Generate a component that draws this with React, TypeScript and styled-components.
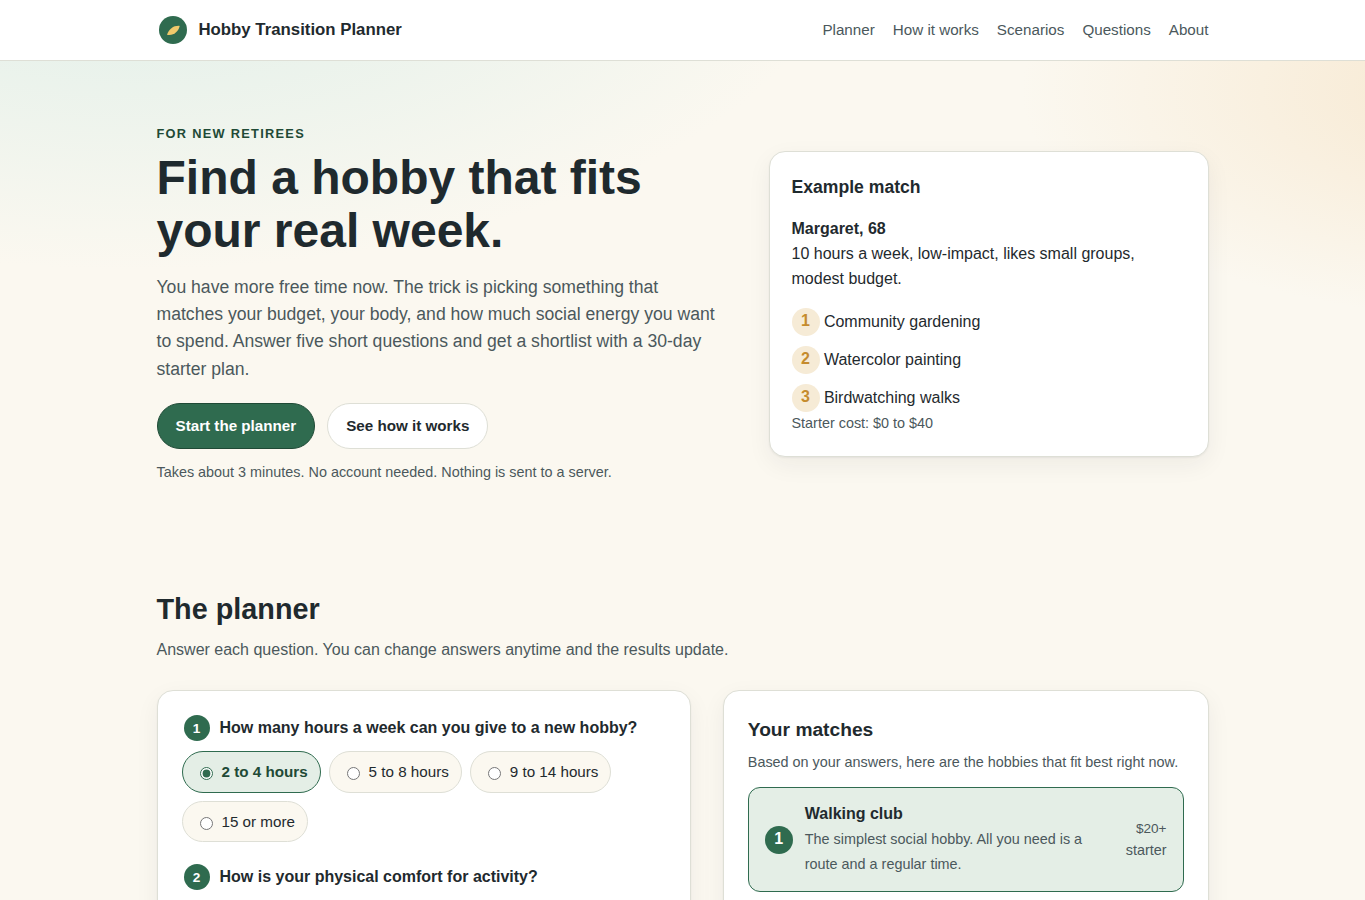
import React, { useState } from "react";
import styled, { createGlobalStyle } from "styled-components";

const c = {
  ink: "#1f2a2e",
  muted: "#4b585c",
  green: "#2f6b4f",
  greenDark: "#1f4a36",
  greenSoft: "#e4eee6",
  paper: "#fbf8f0",
  line: "#dedfd6",
  amber: "#c58b2e",
  amberSoft: "#f6ebd6",
};

const GlobalStyle = createGlobalStyle`
  * { box-sizing: border-box; }
  body {
    margin: 0;
    font-family: "Liberation Sans", Arial, sans-serif;
    font-size: 16px;
    line-height: 1.55;
    color: ${c.ink};
    background:
      radial-gradient(1200px 600px at 10% -10%, #dceee8 0%, transparent 60%),
      radial-gradient(800px 380px at 110% 10%, #f7e8d0 0%, transparent 60%),
      ${c.paper};
  }
`;

const Page = styled.div`
  height: 100vh;
  overflow: hidden;
`;

const Container = styled.div`
  max-width: 1100px;
  margin: 0 auto;
  padding: 0 24px;
`;

const Header = styled.header`
  background: #fff;
  border-bottom: 1px solid ${c.line};
`;

const HeaderRow = styled(Container)`
  display: flex;
  align-items: center;
  justify-content: space-between;
  height: 60px;
`;

const Brand = styled.div`
  display: flex;
  align-items: center;
  gap: 10px;
  font-weight: 700;
  font-size: 16.8px;
`;

const Nav = styled.nav`
  display: flex;
  gap: 18px;
`;

const NavLink = styled.a`
  color: ${c.muted};
  font-size: 15.2px;
  text-decoration: none;
`;

const Hero = styled(Container)`
  display: grid;
  grid-template-columns: 1.3fr 1fr;
  gap: 40px;
  align-items: center;
  padding-top: 63.4px;
`;

const Eyebrow = styled.p`
  margin: 0 0 8px;
  font-size: 12.8px;
  font-weight: 700;
  letter-spacing: 0.1em;
  text-transform: uppercase;
  color: ${c.greenDark};
`;

const Title = styled.h1`
  margin: 0 0 16px;
  font-size: 48px;
  line-height: 1.1;
`;

const Lead = styled.p`
  margin: 0 0 20.3px;
  font-size: 17.6px;
  color: ${c.muted};
`;

const Actions = styled.div`
  display: flex;
  gap: 12px;
  margin-bottom: 12px;
`;

const Button = styled.a<{ $primary?: boolean }>`
  padding: 10px 18px;
  border: 1px solid ${(p) => (p.$primary ? c.greenDark : c.line)};
  border-radius: 999px;
  background: ${(p) => (p.$primary ? c.green : "#fff")};
  color: ${(p) => (p.$primary ? "#fff" : c.ink)};
  font-size: 15.2px;
  font-weight: 700;
`;

const Small = styled.p`
  margin: 0;
  font-size: 14.4px;
  color: ${c.muted};
`;

const Card = styled.div<{ $pad: number }>`
  padding: ${(p) => p.$pad}px;
  background: #fff;
  border: 1px solid ${c.line};
  border-radius: 16px;
  box-shadow: 0 1px 2px rgba(31, 42, 46, 0.06), 0 8px 24px rgba(31, 42, 46, 0.06);
`;

const CardTitle = styled.h3<{ $size: number; $gap: number }>`
  margin: 0 0 ${(p) => p.$gap}px;
  font-size: ${(p) => p.$size}px;
`;

const Persona = styled.p`
  margin: 0 0 16px;
`;

const PickList = styled.ul`
  list-style: none;
  margin: 0;
  padding: 0;
  display: grid;
  gap: 10px;
`;

const Pick = styled.li`
  display: flex;
  align-items: center;
  gap: 4.4px;
  height: 28px;
`;

const PickName = styled.span`
  padding-top: 2px;
`;

const RankBadge = styled.span<{ $solid?: boolean }>`
  width: 28px;
  height: 28px;
  border-radius: 50%;
  text-align: center;
  font-weight: 700;
  line-height: 26px;
  background: ${(p) => (p.$solid ? c.green : c.amberSoft)};
  color: ${(p) => (p.$solid ? "#fff" : c.amber)};
`;

const Planner = styled(Container)`
  padding-top: 103.8px;
`;

const SectionTitle = styled.h2`
  margin: 0 0 6.6px;
  font-size: 28.8px;
`;

const SectionLead = styled.p`
  margin: 0 0 27.4px;
  color: ${c.muted};
`;

const Columns = styled.div`
  display: grid;
  grid-template-columns: 1.1fr 1fr;
  gap: 32px;
  min-height: 400px;
`;

const Question = styled.fieldset`
  border: 0;
  margin: 0 0 22px;
  padding: 0;
`;

const Legend = styled.legend`
  display: flex;
  align-items: center;
  gap: 10px;
  height: 26px;
  margin-bottom: 10px;
  padding: 0 2px;
  font-weight: 700;
`;

const StepBadge = styled.span`
  display: grid;
  place-items: center;
  width: 26px;
  height: 26px;
  border-radius: 50%;
  background: ${c.green};
  color: #fff;
  font-size: 13.6px;
`;

const Options = styled.div`
  display: flex;
  flex-wrap: wrap;
  gap: 8px;
`;

const Option = styled.label<{ $on: boolean }>`
  display: inline-flex;
  align-items: center;
  gap: 6px;
  padding: 8px 12px;
  border: 1px solid ${(p) => (p.$on ? c.green : c.line)};
  border-radius: 999px;
  background: ${(p) => (p.$on ? c.greenSoft : c.paper)};
  color: ${(p) => (p.$on ? c.greenDark : c.ink)};
  font-size: 15.2px;
  font-weight: ${(p) => (p.$on ? 700 : 400)};
`;

const Radio = styled.input`
  accent-color: ${c.green};
`;

const Match = styled.article`
  display: grid;
  grid-template-columns: auto 1fr auto;
  align-items: center;
  gap: 12px;
  margin-top: 14px;
  padding: 14px 16px;
  border: 1px solid ${c.green};
  border-radius: 12px;
  background: ${c.greenSoft};
`;

const MatchName = styled.strong`
  display: block;
`;

const MatchText = styled.span`
  font-size: 14.4px;
  color: ${c.muted};
`;

const Cost = styled.div`
  display: flex;
  flex-direction: column;
  align-items: flex-end;
  color: ${c.muted};
  font-size: 14.4px;
  line-height: 21.5px;
`;

const Price = styled.span`
  font-size: 13.6px;
`;

const Logo = () => (
  <svg width="32" height="32" viewBox="0 0 32 32" aria-hidden="true">
    <circle cx="16" cy="16" r="14" fill={c.green} />
    <path d="M10 20.700C12 15 16.500 11.500 22.700 11.900C21.500 17.500 16.500 22 10 20.700z" fill="#f0c96b" />
  </svg>
);

const navItems = ["Planner", "How it works", "Scenarios", "Questions", "About"];
const picks = ["Community gardening", "Watercolor painting", "Birdwatching walks"];
const hours = ["2 to 4 hours", "5 to 8 hours", "9 to 14 hours", "15 or more"];

export default function App() {
  const [selected, setSelected] = useState(hours[0]);
  return (
    <Page>
      <GlobalStyle />
      <Header>
        <HeaderRow>
          <Brand>
            <Logo />
            Hobby Transition Planner
          </Brand>
          <Nav>
            {navItems.map((n) => (
              <NavLink key={n}>{n}</NavLink>
            ))}
          </Nav>
        </HeaderRow>
      </Header>
      <Hero>
        <div>
          <Eyebrow>For new retirees</Eyebrow>
          <Title>Find a hobby that fits your real week.</Title>
          <Lead>
            You have more free time now. The trick is picking something that matches your budget,
            your body, and how much social energy you want to spend. Answer five short questions
            and get a shortlist with a 30-day starter plan.
          </Lead>
          <Actions>
            <Button $primary>Start the planner</Button>
            <Button>See how it works</Button>
          </Actions>
          <Small>Takes about 3 minutes. No account needed. Nothing is sent to a server.</Small>
        </div>
        <Card $pad={22}>
          <CardTitle $size={17.6} $gap={16.4}>Example match</CardTitle>
          <Persona>
            <strong>Margaret, 68</strong>
            <br />
            10 hours a week, low-impact, likes small groups, modest budget.
          </Persona>
          <PickList>
            {picks.map((p, i) => (
              <Pick key={p}>
                <RankBadge>{i + 1}</RankBadge>
                <PickName>{p}</PickName>
              </Pick>
            ))}
          </PickList>
          <Small>Starter cost: $0 to $40</Small>
        </Card>
      </Hero>
      <Planner>
        <SectionTitle>The planner</SectionTitle>
        <SectionLead>
          Answer each question. You can change answers anytime and the results update.
        </SectionLead>
        <Columns>
          <Card $pad={24}>
            <Question>
              <Legend>
                <StepBadge>1</StepBadge>
                How many hours a week can you give to a new hobby?
              </Legend>
              <Options>
                {hours.map((h) => (
                  <Option key={h} $on={h === selected}>
                    <Radio
                      type="radio"
                      name="hours"
                      checked={h === selected}
                      onChange={() => setSelected(h)}
                    />
                    {h}
                  </Option>
                ))}
              </Options>
            </Question>
            <Question>
              <Legend>
                <StepBadge>2</StepBadge>
                How is your physical comfort for activity?
              </Legend>
            </Question>
          </Card>
          <Card $pad={24}>
            <CardTitle $size={19.2} $gap={6}>Your matches</CardTitle>
            <Small>Based on your answers, here are the hobbies that fit best right now.</Small>
            <Match>
              <RankBadge $solid>1</RankBadge>
              <div>
                <MatchName>Walking club</MatchName>
                <MatchText>
                  The simplest social hobby. All you need is a route and a regular time.
                </MatchText>
              </div>
              <Cost>
                <Price>$20+</Price>
                <span>starter</span>
              </Cost>
            </Match>
          </Card>
        </Columns>
      </Planner>
    </Page>
  );
}
